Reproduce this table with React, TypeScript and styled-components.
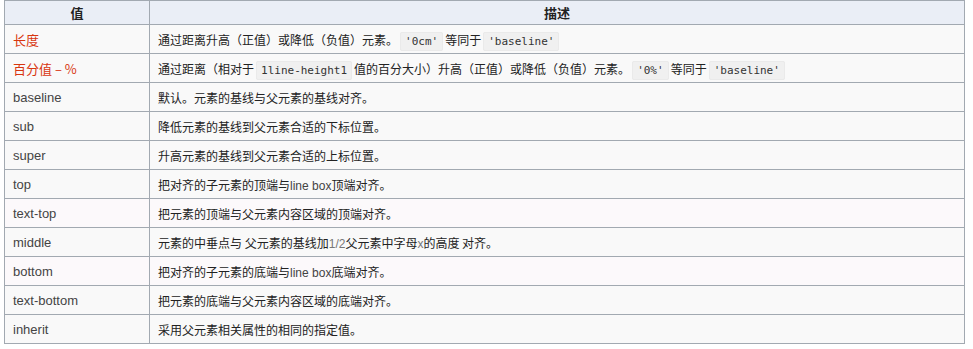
import styled, { createGlobalStyle } from "styled-components";

const GlobalStyle = createGlobalStyle`
  body {
    margin: 0;
    padding: 0 0 0 4px;
    background: #ffffff;
    font-family: "Liberation Sans", "Noto Sans CJK SC", sans-serif;
  }
`;

const Table = styled.table`
  border-collapse: collapse;
  width: 961px;
  margin-top: 0;
  background: #f9f9f9;
  border: 1px solid #a2a9b1;
  color: #222;
  font-size: 13px;
  table-layout: fixed;
`;

const HeadCell = styled.th`
  height: 23px;
  padding: 0 8px;
  background: #eaeef6;
  border: 1px solid #a2a9b1;
  font-family: "Noto Sans CJK SC", sans-serif;
  font-weight: bold;
  font-size: 13px;
  color: #222;
  text-align: center;
`;

const Row = styled.tr<{ $tint?: boolean }>`
  background: ${(p) => (p.$tint ? "#fcf9fb" : "#f9f9f9")};
`;

const ValueCell = styled.td<{ $red?: boolean }>`
  height: 28px;
  padding: 0 8px;
  border: 1px solid #a2a9b1;
  font-family: ${(p) =>
    p.$red
      ? `"Noto Sans CJK SC", sans-serif`
      : `"Liberation Sans", "Noto Sans CJK SC", sans-serif`};
  font-size: 13px;
  color: ${(p) => (p.$red ? "#d8360f" : "#444")};
  vertical-align: middle;
`;

const DescCell = styled.td`
  height: 28px;
  padding: 0 8px;
  border: 1px solid #a2a9b1;
  font-family: "Noto Sans CJK SC", sans-serif;
  font-size: 12px;
  color: #222;
  vertical-align: middle;
  white-space: nowrap;
`;

const Code = styled.code`
  font-family: "DejaVu Sans Mono", "Liberation Mono", monospace;
  font-size: 11px;
  color: #333;
  background: #f0f0f0;
  border: 1px solid #eaeaea;
  border-radius: 2px;
  padding: 2px 4px;
  margin: 0 2px;
`;

const Latin = styled.span<{ $light?: boolean }>`
  font-family: "Liberation Sans", sans-serif;
  color: ${(p) => (p.$light ? "#777" : "#444")};
`;

type Entry = {
  value: string;
  red?: boolean;
  tint?: boolean;
  desc: React.ReactNode;
};

const rows: Entry[] = [
  {
    value: "长度",
    red: true,
    desc: (
      <>
        通过距离升高（正值）或降低（负值）元素。<Code>'0cm'</Code>等同于
        <Code>'baseline'</Code>
      </>
    ),
  },
  {
    value: "百分值 – %",
    red: true,
    desc: (
      <>
        通过距离（相对于<Code>1line-height1</Code>值的百分大小）升高（正值）或降低（负值）元素。
        <Code>'0%'</Code>等同于<Code>'baseline'</Code>
      </>
    ),
  },
  { value: "baseline", desc: "默认。元素的基线与父元素的基线对齐。" },
  { value: "sub", desc: "降低元素的基线到父元素合适的下标位置。" },
  { value: "super", desc: "升高元素的基线到父元素合适的上标位置。" },
  {
    value: "top",
    desc: (
      <>
        把对齐的子元素的顶端与<Latin>line box</Latin>顶端对齐。
      </>
    ),
  },
  { value: "text-top", tint: true, desc: "把元素的顶端与父元素内容区域的顶端对齐。" },
  {
    value: "middle",
    desc: (
      <>
        元素的中垂点与 父元素的基线加<Latin $light>1/2</Latin>父元素中字母
        <Latin $light>x</Latin>的高度 对齐。
      </>
    ),
  },
  {
    value: "bottom",
    tint: true,
    desc: (
      <>
        把对齐的子元素的底端与<Latin>line box</Latin>底端对齐。
      </>
    ),
  },
  { value: "text-bottom", desc: "把元素的底端与父元素内容区域的底端对齐。" },
  { value: "inherit", desc: "采用父元素相关属性的相同的指定值。" },
];

export default function App() {
  return (
    <>
      <GlobalStyle />
      <Table>
        <colgroup>
          <col style={{ width: 145 }} />
          <col />
        </colgroup>
        <thead>
          <tr>
            <HeadCell>值</HeadCell>
            <HeadCell>描述</HeadCell>
          </tr>
        </thead>
        <tbody>
          {rows.map((r) => (
            <Row key={r.value} $tint={r.tint}>
              <ValueCell $red={r.red}>{r.value}</ValueCell>
              <DescCell>{r.desc}</DescCell>
            </Row>
          ))}
        </tbody>
      </Table>
    </>
  );
}
